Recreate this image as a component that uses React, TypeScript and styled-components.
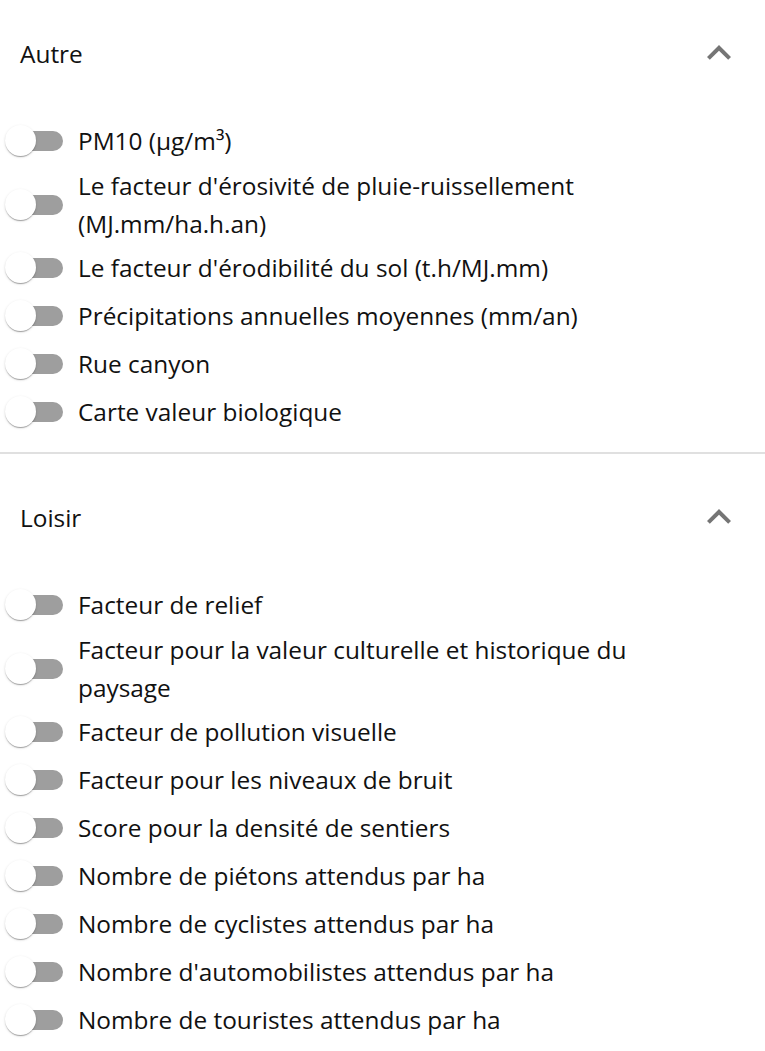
import React from "react";
import styled, { createGlobalStyle } from "styled-components";

const GlobalStyle = createGlobalStyle`
  html, body { margin: 0; padding: 0; background: #ffffff; }
  body {
    font-family: "Open Sans", "Noto Sans", sans-serif;
    color: #111111;
    -webkit-font-smoothing: antialiased;
  }
`;

const Page = styled.div`
  width: 765px;
  display: flex;
  flex-direction: column;
`;

const Section = styled.section<{ $first?: boolean }>`
  display: flex;
  flex-direction: column;
  padding-top: ${(p) => (p.$first ? "0" : "10px")};
`;

const Header = styled.div`
  height: 108px;
  display: flex;
  align-items: center;
  justify-content: space-between;
  padding: 0 22px 0 20px;
`;

const Title = styled.span`
  font-size: 24.4px;
  line-height: 38px;
`;

const ChevronButton = styled.span`
  width: 48px;
  height: 48px;
  display: flex;
  align-items: center;
  justify-content: center;
  color: #757575;
  margin-top: -2px;
`;

const List = styled.div`
  display: flex;
  flex-direction: column;
  padding: 9px 0 16px;
`;

const Row = styled.label<{ $lines?: number }>`
  display: flex;
  align-items: center;
  min-height: ${(p) => (p.$lines === 2 ? "79px" : "48px")};
  padding-right: 48px;
  cursor: pointer;
`;

const SwitchBox = styled.span`
  position: relative;
  flex: 0 0 78px;
  height: 48px;
`;

const Track = styled.span`
  position: absolute;
  left: 12px;
  top: 50%;
  width: 51px;
  height: 20px;
  margin-top: -10px;
  border-radius: 10px;
  background: #9e9e9e;
`;

const Thumb = styled.span`
  position: absolute;
  left: 5px;
  top: 50%;
  width: 31px;
  height: 31px;
  margin-top: -16px;
  border-radius: 50%;
  background: #ffffff;
  box-shadow: 0 2px 1px -1px rgba(0, 0, 0, 0.2), 0 1px 1px 0 rgba(0, 0, 0, 0.14),
    0 1px 3px 0 rgba(0, 0, 0, 0.12);
`;

const Label = styled.span`
  font-size: 24.4px;
  line-height: 38px;
`;

const Divider = styled.hr`
  margin: 0;
  border: none;
  height: 2px;
  background: #e0e0e0;
`;

const ExpandLess = () => (
  <svg width="48" height="48" viewBox="0 0 24 24" fill="currentColor">
    <path d="M12 8l-6 6 1.41 1.41L12 10.83l4.59 4.58L18 14z" />
  </svg>
);

type Item = { label: string; lines?: number };

const sections: { title: string; items: Item[] }[] = [
  {
    title: "Autre",
    items: [
      { label: "PM10 (µg/m³)" },
      { label: "Le facteur d'érosivité de pluie-ruissellement (MJ.mm/ha.h.an)", lines: 2 },
      { label: "Le facteur d'érodibilité du sol (t.h/MJ.mm)" },
      { label: "Précipitations annuelles moyennes (mm/an)" },
      { label: "Rue canyon" },
      { label: "Carte valeur biologique" },
    ],
  },
  {
    title: "Loisir",
    items: [
      { label: "Facteur de relief" },
      { label: "Facteur pour la valeur culturelle et historique du paysage", lines: 2 },
      { label: "Facteur de pollution visuelle" },
      { label: "Facteur pour les niveaux de bruit" },
      { label: "Score pour la densité de sentiers" },
      { label: "Nombre de piétons attendus par ha" },
      { label: "Nombre de cyclistes attendus par ha" },
      { label: "Nombre d'automobilistes attendus par ha" },
      { label: "Nombre de touristes attendus par ha" },
    ],
  },
];

export default function App() {
  return (
    <Page>
      <GlobalStyle />
      {sections.map((s, i) => (
        <React.Fragment key={s.title}>
          <Section $first={i === 0}>
            <Header>
              <Title>{s.title}</Title>
              <ChevronButton>
                <ExpandLess />
              </ChevronButton>
            </Header>
            <List>
              {s.items.map((it) => (
                <Row key={it.label} $lines={it.lines}>
                  <SwitchBox>
                    <Track />
                    <Thumb />
                  </SwitchBox>
                  <Label>{it.label}</Label>
                </Row>
              ))}
            </List>
          </Section>
          {i === 0 && <Divider />}
        </React.Fragment>
      ))}
    </Page>
  );
}
